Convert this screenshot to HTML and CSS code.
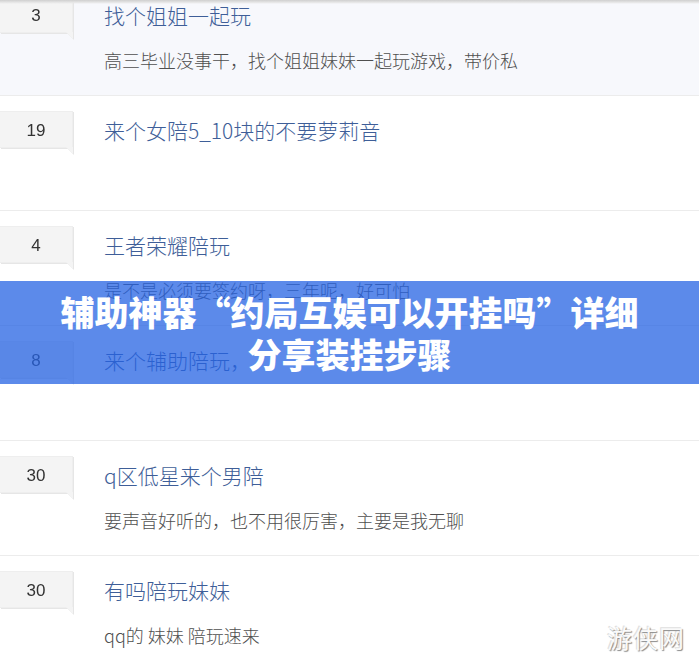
FILE: index.html
```html
<!DOCTYPE html>
<html lang="zh-CN">
<head>
<meta charset="utf-8">
<title>约局互娱 陪玩需求</title>
<link rel="stylesheet" href="styles.css">
</head>
<body>
<div class="top-shadow"></div>
<ul class="post-list">
  <li class="post post--active">
    <div class="count">3</div>
    <div class="post-body">
      <a class="post-title">找个姐姐一起玩</a>
      <p class="post-desc">高三毕业没事干，找个姐姐妹妹一起玩游戏，带价私</p>
    </div>
  </li>
  <li class="post">
    <div class="count">19</div>
    <div class="post-body">
      <a class="post-title">来个女陪5_10块的不要萝莉音</a>
    </div>
  </li>
  <li class="post">
    <div class="count">4</div>
    <div class="post-body">
      <a class="post-title">王者荣耀陪玩</a>
      <p class="post-desc">是不是必须要签约呀，三年呢，好可怕</p>
    </div>
  </li>
  <li class="post">
    <div class="count">8</div>
    <div class="post-body">
      <a class="post-title">来个辅助陪玩，</a>
    </div>
  </li>
  <li class="post">
    <div class="count">30</div>
    <div class="post-body">
      <a class="post-title">q区低星来个男陪</a>
      <p class="post-desc">要声音好听的，也不用很厉害，主要是我无聊</p>
    </div>
  </li>
  <li class="post">
    <div class="count">30</div>
    <div class="post-body">
      <a class="post-title">有吗陪玩妹妹</a>
      <p class="post-desc">qq的 妹妹 陪玩速来</p>
    </div>
  </li>
</ul>

<div class="banner">
  <h1 class="banner-title">辅助神器“约局互娱可以开挂吗”详细<br>分享装挂步骤</h1>
</div>

<div class="watermark">游侠网</div>
</body>
</html>
```

FILE: styles.css
```css
html, body {
  margin: 0;
  padding: 0;
  background: #fff;
  overflow: hidden;
}

body {
  position: relative;
  width: 699px;
  height: 666px;
  font-family: "Noto Sans CJK SC", "Liberation Sans", sans-serif;
}

/* thin gray strip along the top edge */
.top-shadow {
  position: absolute;
  top: 0;
  left: 0;
  right: 0;
  height: 4px;
  background: linear-gradient(#cfcfcf, #e6e6e6 60%, rgba(240, 240, 240, 0));
  z-index: 2;
}

.post-list {
  list-style: none;
  margin: -19px 0 0;
  padding: 0;
}

.post {
  box-sizing: border-box;
  height: 115px;
  display: flex;
  align-items: flex-start;
  gap: 31px;
  padding-top: 15px;
  border-bottom: 1px solid #ececec;
}

.post--active {
  background: #f7f8fc;
}

/* reply-count bubble with a small tail at the lower right */
.count {
  position: relative;
  flex: 0 0 73px;
  height: 37px;
  box-sizing: border-box;
  background: #f4f4f4;
  border: 1px solid #eeeeee;
  border-left: none;
  font-family: "Liberation Sans", Arial, sans-serif;
  font-size: 17px;
  line-height: 37px;
  color: #333;
  text-align: center;
  filter: drop-shadow(1px 1px 0 #e6e6e6);
}

.count::after {
  content: "";
  position: absolute;
  right: -1px;
  top: 100%;
  width: 0;
  height: 0;
  border-top: 7px solid #f4f4f4;
  border-left: 7px solid transparent;
}

.post-body {
  padding-top: 5px;
}

.post-title {
  display: block;
  font-size: 21px;
  line-height: 28px;
  font-weight: 300;
  color: #3e5e98;
  text-decoration: none;
}

.post-desc {
  margin: 17px 0 0;
  font-size: 18px;
  line-height: 28px;
  font-weight: 300;
  color: #4f4f4f;
}

/* translucent headline band laid over the list */
.banner {
  position: absolute;
  top: 281px;
  left: 0;
  right: 0;
  height: 103px;
  background: rgba(38, 99, 227, 0.75);
  display: flex;
  align-items: center;
  justify-content: center;
  z-index: 3;
}

.banner-title {
  margin: 0;
  padding-top: 1px;
  font-size: 34px;
  line-height: 42px;
  font-weight: 900;
  color: #fff;
  text-align: center;
  letter-spacing: 0;
}

.watermark {
  position: absolute;
  right: 14px;
  bottom: 14px;
  font-size: 25px;
  line-height: 30px;
  color: #fafafa;
  text-shadow: 1px 1px 1px #8a8a8a, -1px -1px 0 #e0e0e0;
  letter-spacing: 1px;
  z-index: 4;
}
```
